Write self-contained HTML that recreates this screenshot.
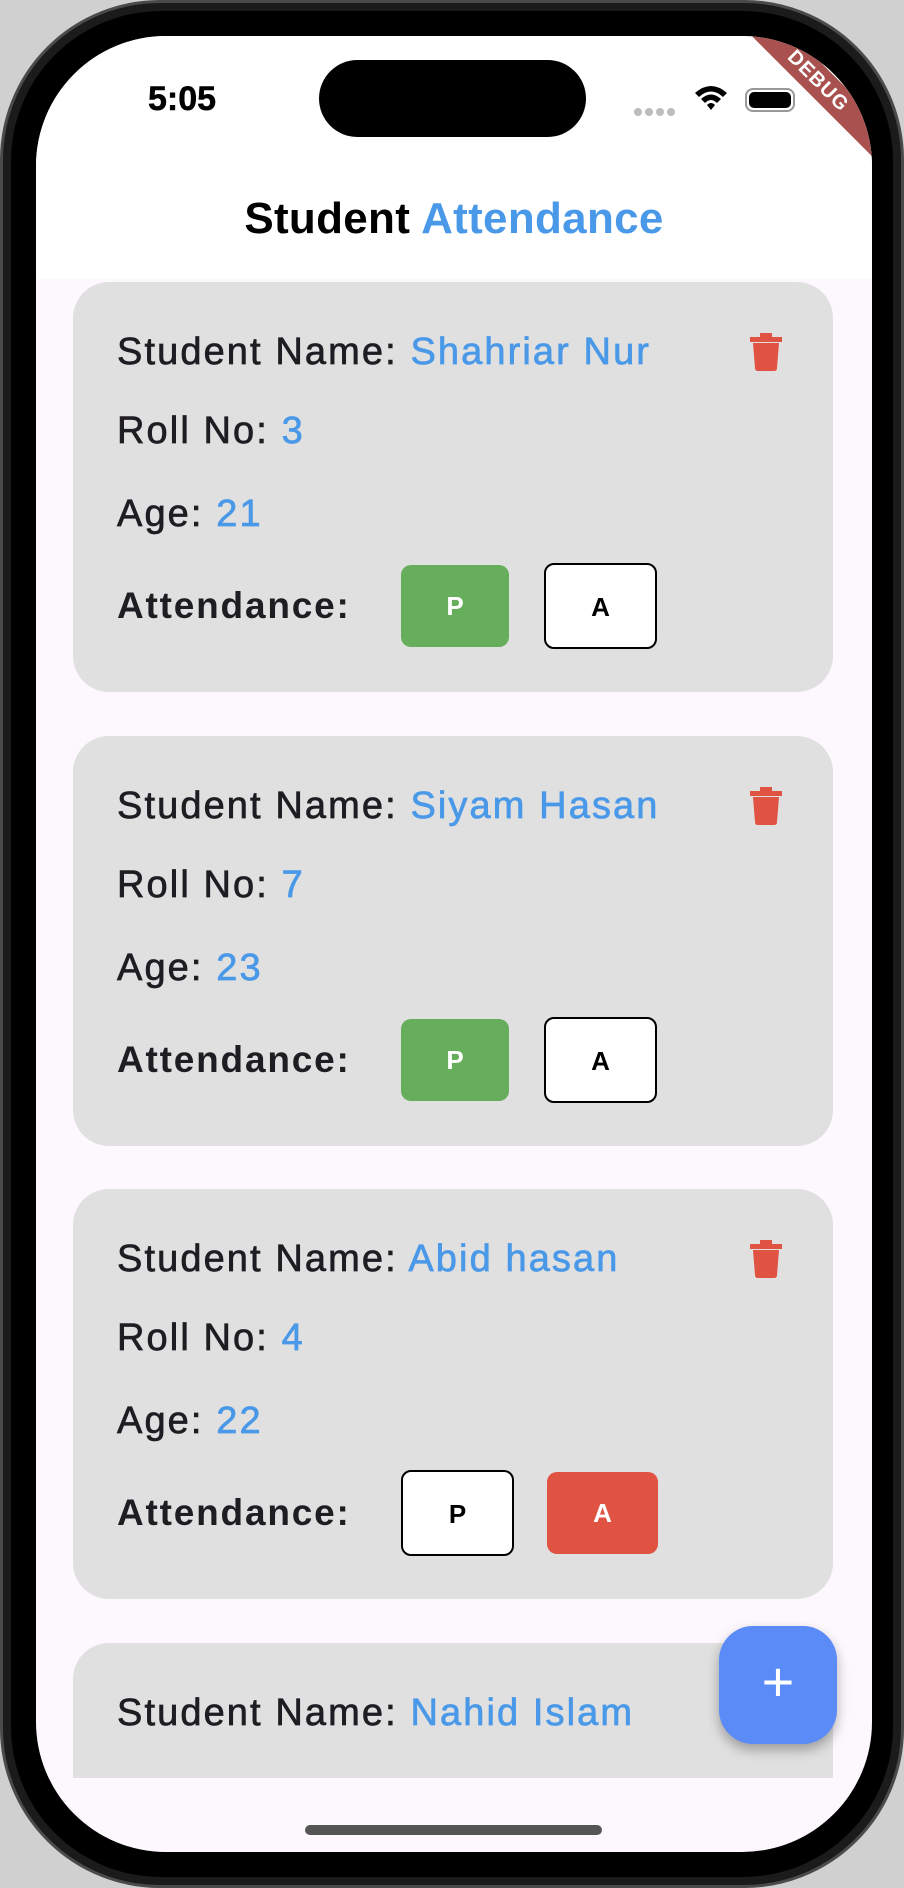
<!DOCTYPE html>
<html><head><meta charset="utf-8"><style>
*{margin:0;padding:0;box-sizing:border-box}
body{width:904px;height:1888px;background:#d0d0d0;overflow:hidden;font-family:"Liberation Sans",sans-serif;position:relative}
.phone{position:absolute;left:0;top:0;width:904px;height:1888px;border-radius:160px;background:#1b1b1b;border:3px solid #4a4a4a}
.bezel{position:absolute;left:8px;top:8px;right:8px;bottom:8px;border-radius:150px;background:#000}
.screen{position:absolute;left:36px;top:36px;width:836px;height:1816px;border-radius:130px;background:#fcf8fd;overflow:hidden}
.top{position:absolute;left:0;top:0;width:836px;height:243px;background:#fff}
.time{position:absolute;left:112px;top:44px;font-size:34px;font-weight:600;color:#000;-webkit-text-stroke:0.5px #000}
.island{position:absolute;left:283px;top:24px;width:267px;height:77px;border-radius:39px;background:#000}
.dots{position:absolute;left:598px;top:67px}
.dots span{display:inline-block;width:8px;height:8px;border-radius:4px;background:#bdbdbd;margin-right:3px}
.bat{position:absolute;left:709px;top:52px;width:50px;height:24px;border:2px solid #999;border-radius:8px;padding:2px}
.bat div{width:100%;height:100%;background:#000;border-radius:5px}
.ribbon{position:absolute;right:-46px;top:30px;width:200px;height:30px;background:#a8514f;transform:rotate(45deg);color:#fff;font-weight:bold;font-size:20px;text-align:center;line-height:30px;letter-spacing:1px}
.title{position:absolute;left:0;width:836px;top:158px;text-align:center;font-size:44px;font-weight:bold;color:#000;letter-spacing:0.3px}
.b{color:#4a98e8}
.card{position:absolute;left:37px;width:760px;height:410px;border-radius:36px;background:#e0e0e0;color:#1f1d22}
.row{position:absolute;left:44px;font-size:38px;letter-spacing:2.1px;line-height:40px;-webkit-text-stroke:0.7px currentColor}
.row .b{-webkit-text-stroke:0.7px #4a98e8}
.att{font-weight:bold;-webkit-text-stroke:0;letter-spacing:1.8px;font-size:37px}
.btn{position:absolute;top:283px;width:108px;height:82px;border-radius:10px;font-weight:bold;font-size:26px;text-align:center;line-height:82px}
.g{left:328px;background:#67ae5c;color:#fff}
.w{left:471px;width:113px;height:86px;top:281px;line-height:84px;background:#fff;border:2px solid #000;color:#000}
.w1{left:328px}
.r{left:474px;width:111px;background:#e05242;color:#fff}
.trash{position:absolute;left:677px;top:51px}
.fab{position:absolute;left:683px;top:1590px;width:118px;height:118px;border-radius:34px;background:#5a8bf6;box-shadow:0 6px 12px rgba(0,0,0,.3);color:#fff;font-size:56px;text-align:center;line-height:112px}
.home{position:absolute;left:269px;top:1789px;width:297px;height:10px;border-radius:5px;background:#555}
</style></head><body>
<div class="phone"><div class="bezel"></div></div>
<div class="screen">
<div class="top"></div>
<div class="time">5:05</div>
<div class="island"></div>
<div class="dots"><span></span><span></span><span></span><span></span></div>
<svg style="position:absolute;left:657px;top:46px" width="36" height="32" viewBox="0 0 36 32"><path d="M2 11 Q18 -3 34 11 L30 15 Q18 4 6 15Z M8 17 Q18 8 28 17 L24 21 Q18 15 12 21Z M14 23 Q18 19 22 23 L18 28Z" fill="#000"/></svg>
<div class="bat"><div></div></div>
<div class="ribbon">DEBUG</div>
<div class="title">Student <span class="b">Attendance</span></div>

<div class="card" style="top:246px">
<div class="row" style="top:50px">Student Name: <span class="b">Shahriar Nur</span></div>
<div class="row" style="top:129px">Roll No: <span class="b">3</span></div>
<div class="row" style="top:212px">Age: <span class="b">21</span></div>
<div class="row att" style="top:304px">Attendance:</div>
<div class="btn g">P</div><div class="btn w">A</div>
<svg class="trash" width="32" height="38" viewBox="0 0 32 38"><rect x="0" y="4" width="32" height="5" fill="#e05242"/><rect x="10" y="0" width="12" height="5" fill="#e05242"/><path d="M3 10H29L27 35Q27 38 24 38H8Q5 38 5 35Z" fill="#e05242"/></svg>
</div>

<div class="card" style="top:700px">
<div class="row" style="top:50px">Student Name: <span class="b">Siyam Hasan</span></div>
<div class="row" style="top:129px">Roll No: <span class="b">7</span></div>
<div class="row" style="top:212px">Age: <span class="b">23</span></div>
<div class="row att" style="top:304px">Attendance:</div>
<div class="btn g">P</div><div class="btn w">A</div>
<svg class="trash" width="32" height="38" viewBox="0 0 32 38"><rect x="0" y="4" width="32" height="5" fill="#e05242"/><rect x="10" y="0" width="12" height="5" fill="#e05242"/><path d="M3 10H29L27 35Q27 38 24 38H8Q5 38 5 35Z" fill="#e05242"/></svg>
</div>

<div class="card" style="top:1153px">
<div class="row" style="top:50px">Student Name: <span class="b">Abid hasan</span></div>
<div class="row" style="top:129px">Roll No: <span class="b">4</span></div>
<div class="row" style="top:212px">Age: <span class="b">22</span></div>
<div class="row att" style="top:304px">Attendance:</div>
<div class="btn w w1">P</div><div class="btn r">A</div>
<svg class="trash" width="32" height="38" viewBox="0 0 32 38"><rect x="0" y="4" width="32" height="5" fill="#e05242"/><rect x="10" y="0" width="12" height="5" fill="#e05242"/><path d="M3 10H29L27 35Q27 38 24 38H8Q5 38 5 35Z" fill="#e05242"/></svg>
</div>

<div class="card" style="top:1607px;height:135px;border-radius:36px 36px 0 0">
<div class="row" style="top:50px">Student Name: <span class="b">Nahid Islam</span></div>
</div>

<div class="fab">+</div>
<div class="home"></div>
</div>
</body></html>
